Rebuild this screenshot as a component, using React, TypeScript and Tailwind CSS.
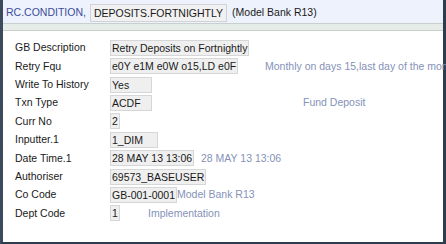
import React from "react";

type Row = {
  label: string;
  value: string;
  minW?: string;
  slot?: string;
  note?: string;
};

// slot = distance from the value column to where the grey description starts
const ROWS: Row[] = [
  { label: "GB Description", value: "Retry Deposits on Fortnightly" },
  {
    label: "Retry Fqu",
    value: "e0Y e1M e0W o15,LD e0F",
    slot: "w-[155px]",
    note: "Monthly on days 15,last day of the month",
  },
  { label: "Write To History", value: "Yes", minW: "min-w-[42px]" },
  { label: "Txn Type", value: "ACDF", minW: "min-w-[42px]", slot: "w-[193px]", note: "Fund Deposit" },
  { label: "Curr No", value: "2" },
  { label: "Inputter.1", value: "1_DIM", minW: "min-w-[48px]" },
  { label: "Date Time.1", value: "28 MAY 13 13:06", slot: "w-[91px]", note: "28 MAY 13 13:06" },
  { label: "Authoriser", value: "69573_BASEUSER" },
  { label: "Co Code", value: "GB-001-0001", slot: "w-[67px]", note: "Model Bank R13" },
  { label: "Dept Code", value: "1", slot: "w-[38px]", note: "Implementation" },
];

export default function App() {
  return (
    <div className="w-[446px] h-[244px] overflow-hidden bg-white font-['Liberation_Sans',Arial,sans-serif] text-[10.5px] text-[#1a1a1a]">
      <div className="flex h-full flex-col border-l-[3px] border-r-[3px] border-b-[2px] border-l-[#3b4a5c] border-r-[#2e3d4e] border-b-[#2e3d4e]">
        {/* Title bar */}
        <div className="flex h-[23px] shrink-0 items-center bg-[#eef2fc] pl-[3px] pt-[3px] text-[10.5px]">
          <span className="text-[#3a4d9a]">RC.CONDITION,</span>
          <span className="ml-[4px] border border-[#cfd2d6] bg-[#f1f1f1] px-[3px] leading-[16px]">
            DEPOSITS.FORTNIGHTLY
          </span>
          <span className="ml-[5px]">(Model Bank R13)</span>
        </div>
        <div className="h-[8px] shrink-0 border-y border-[#c9cfcc] bg-[#e6ede9]" />

        {/* Fields */}
        <div className="flex flex-col gap-[2px] pl-[12px] pt-[9px]">
          {ROWS.map((r) => (
            <div key={r.label} className="flex h-[16.4px] items-center whitespace-nowrap">
              <div className="w-[95px] shrink-0">{r.label}</div>
              <div className={`${r.slot ?? ""} shrink-0`}>
                <span
                  className={`${r.minW ?? ""} inline-block h-[16px] border border-[#d4d6d8] bg-[#efefef] px-[1px] leading-[14px]`}
                >
                  {r.value}
                </span>
              </div>
              {r.note && <div className="text-[#8592b8]">{r.note}</div>}
            </div>
          ))}
        </div>
      </div>
    </div>
  );
}
